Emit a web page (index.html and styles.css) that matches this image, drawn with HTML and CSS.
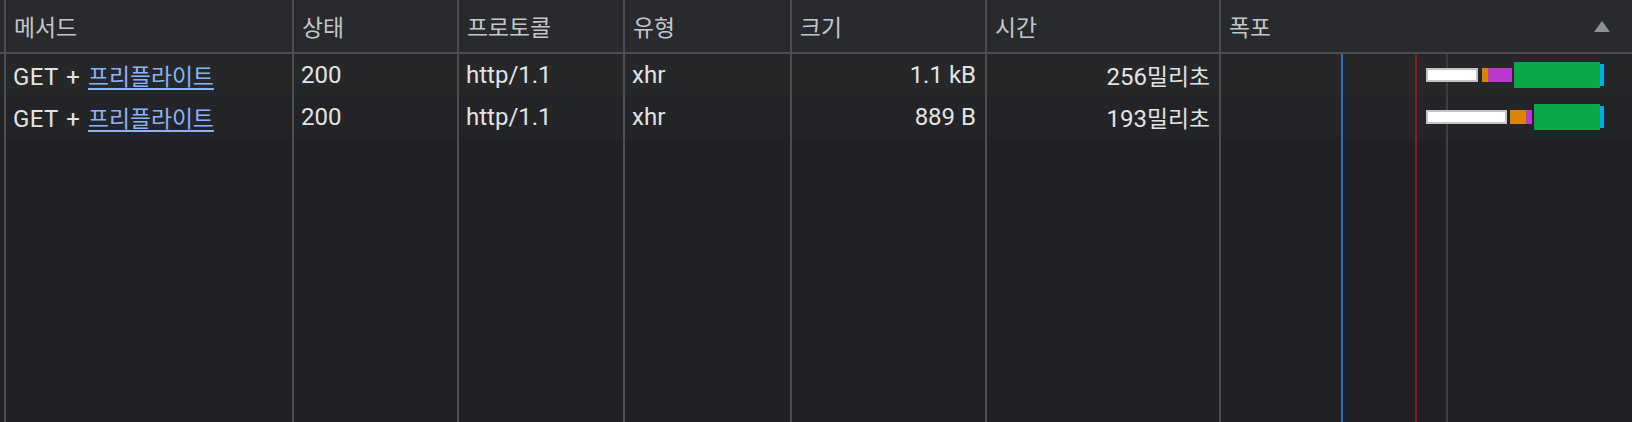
FILE: index.html
```html
<!DOCTYPE html>
<html lang="ko">
<head>
<meta charset="utf-8">
<title>Network</title>
<link rel="stylesheet" href="styles.css">
</head>
<body>
<div class="grid">
  <div class="hd sp"></div>
  <div class="hd cell"><span class="ko">메서드</span></div>
  <div class="hd cell"><span class="ko">상태</span></div>
  <div class="hd cell"><span class="ko">프로토콜</span></div>
  <div class="hd cell"><span class="ko">유형</span></div>
  <div class="hd cell"><span class="ko">크기</span></div>
  <div class="hd cell"><span class="ko">시간</span></div>
  <div class="hd cell wf-head"><span class="ko">폭포</span><span class="sort"></span></div>

  <div class="r r1">
    <div class="sp"></div>
    <div class="cell"><span class="method">GET + <a class="link ko" href="#">프리플라이트</a></span></div>
    <div class="cell">200</div>
    <div class="cell">http/1.1</div>
    <div class="cell">xhr</div>
    <div class="cell num">1.1 kB</div>
    <div class="cell num"><span>256<span class="ko">밀리초</span></span></div>
    <div class="cell wf">
      <span class="bar wait" style="left:205px;width:52px"></span>
      <span class="bar orange" style="left:261px;width:6px"></span>
      <span class="bar purple" style="left:267px;width:24px"></span>
      <span class="bar green" style="left:293px;width:86px"></span>
      <span class="bar cyan" style="left:379px;width:4px"></span>
    </div>
  </div>

  <div class="r r2">
    <div class="sp"></div>
    <div class="cell"><span class="method">GET + <a class="link ko" href="#">프리플라이트</a></span></div>
    <div class="cell">200</div>
    <div class="cell">http/1.1</div>
    <div class="cell">xhr</div>
    <div class="cell num">889 B</div>
    <div class="cell num"><span>193<span class="ko">밀리초</span></span></div>
    <div class="cell wf">
      <span class="bar wait" style="left:205px;width:81px"></span>
      <span class="bar orange" style="left:289px;width:16px"></span>
      <span class="bar purple" style="left:305px;width:6px"></span>
      <span class="bar green" style="left:313px;width:66px"></span>
      <span class="bar cyan" style="left:379px;width:4px"></span>
    </div>
  </div>

  <div class="r fill">
    <div class="sp"></div>
    <div class="cell"></div>
    <div class="cell"></div>
    <div class="cell"></div>
    <div class="cell"></div>
    <div class="cell"></div>
    <div class="cell"></div>
    <div class="cell"></div>
  </div>

  <div class="timeline">
    <span class="tl blue"></span>
    <span class="tl red"></span>
    <span class="tl grid-line"></span>
  </div>
</div>
</body>
</html>
```

FILE: styles.css
```css
html, body {
  margin: 0;
  padding: 0;
  background: #202124;
  height: 100%;
  overflow: hidden;
}

body {
  font-family: Roboto, "Liberation Sans", "Noto Sans CJK KR", sans-serif;
  font-size: 24px;
  color: #e3e3e3;
}

.grid {
  display: grid;
  grid-template-columns: 4px 288px 165px 166px 167px 195px 234px 1fr;
  grid-template-rows: 54px 42px 42px 1fr;
  height: 422px;
  position: relative;
}

.r {
  display: contents;
}

.cell {
  border-left: 2px solid #4b4d51;
  padding: 0 9px 0 7px;
  display: flex;
  align-items: center;
  white-space: nowrap;
  overflow: hidden;
  min-width: 0;
}

.hd {
  background: #292a2d;
  border-bottom: 2px solid #4b4d51;
  color: #c3c6ca;
}

.hd.cell {
  padding-left: 8px;
}

.ko {
  font-family: "Noto Sans CJK KR", sans-serif;
  font-size: 22.8px;
}

.method {
  letter-spacing: 0.4px;
  word-spacing: 1.5px;
}

.method .link {
  letter-spacing: 0;
}

.r1 > div {
  background: #262729;
}

.r2 > div {
  background: #232427;
}

.fill > div {
  background: #202124;
}

.num {
  justify-content: flex-end;
}

.link {
  color: #8ab4f8;
  text-decoration: underline;
  text-decoration-thickness: 2px;
  text-underline-offset: 3px;
}

.wf-head {
  position: relative;
}

.sort {
  position: absolute;
  right: 22px;
  top: 21px;
  width: 0;
  height: 0;
  border-left: 8px solid transparent;
  border-right: 8px solid transparent;
  border-bottom: 11px solid #8e9297;
}

.wf {
  position: relative;
  padding: 0;
}

.bar {
  position: absolute;
  box-sizing: border-box;
  z-index: 2;
}

.wait {
  top: 14px;
  height: 14px;
  background: #ffffff;
  border: 2px solid #c4c4c4;
}

.orange {
  top: 14px;
  height: 14px;
  background: #dc8400;
}

.purple {
  top: 14px;
  height: 14px;
  background: #b93ad1;
}

.green {
  top: 8px;
  height: 26px;
  background: #07a846;
}

.cyan {
  top: 10px;
  height: 22px;
  background: #03a9f4;
}

.timeline {
  position: absolute;
  grid-column: 8;
  grid-row: 2 / 5;
  top: 0;
  bottom: 0;
  left: 2px;
  right: 0;
  pointer-events: none;
  z-index: 1;
}

.tl {
  position: absolute;
  top: 0;
  bottom: 0;
  width: 2px;
}

.tl.blue {
  left: 120px;
  background: #2e6cc0;
}

.tl.red {
  left: 194px;
  background: #8c1d1d;
}

.tl.grid-line {
  left: 225px;
  width: 2px;
  background: #3c3e42;
}
```
